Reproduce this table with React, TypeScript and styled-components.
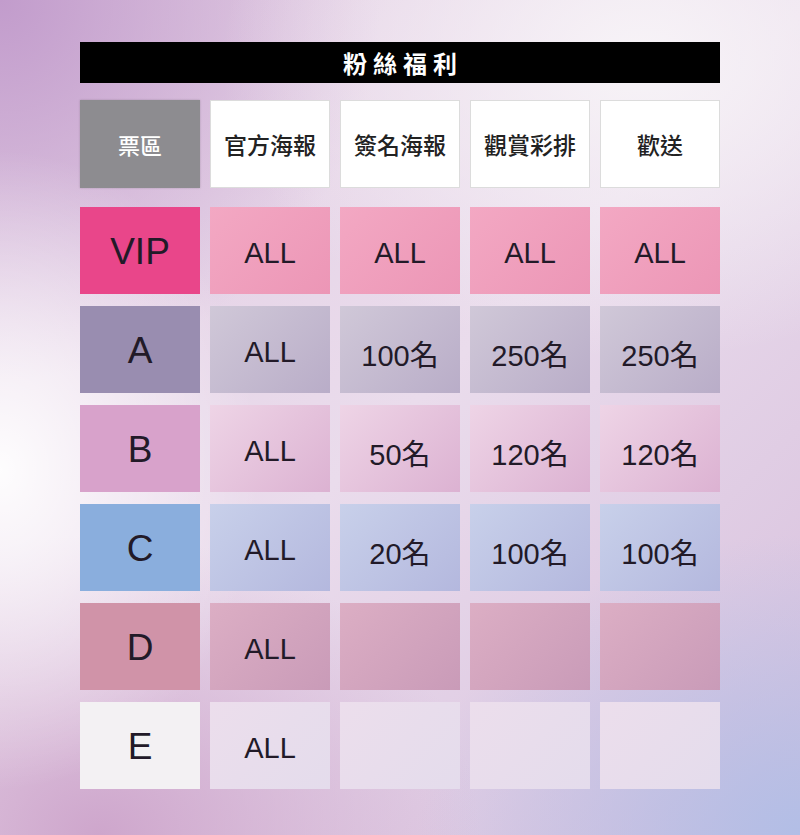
import React from 'react';
import styled, { createGlobalStyle } from 'styled-components';

const GlobalStyle = createGlobalStyle`
	html, body {
		margin: 0;
		padding: 0;
	}
	body {
		font-family: "Liberation Sans", "Noto Sans CJK TC", sans-serif;
	}
`;

interface Tier {
	name: string;
	tone: string;
	from: string;
	to: string;
	values: string[];
}

const headers = ['官方海報', '簽名海報', '觀賞彩排', '歡送'];

const tiers: Tier[] = [
	{ name: 'VIP', tone: '#e9468a', from: '#f3a8c3', to: '#ec96b6', values: ['ALL', 'ALL', 'ALL', 'ALL'] },
	{ name: 'A', tone: '#998db0', from: '#d0c8d8', to: '#b9adc8', values: ['ALL', '100名', '250名', '250名'] },
	{ name: 'B', tone: '#d8a2cb', from: '#eed4e6', to: '#dcb2d2', values: ['ALL', '50名', '120名', '120名'] },
	{ name: 'C', tone: '#8aaedd', from: '#c8d0ea', to: '#b4b8de', values: ['ALL', '20名', '100名', '100名'] },
	{ name: 'D', tone: '#d093a8', from: '#dcaec4', to: '#c99bb8', values: ['ALL', '', '', ''] },
	{ name: 'E', tone: '#f3f1f3', from: '#ecdeec', to: '#e4dcec', values: ['ALL', '', '', ''] },
];

function App() {
	return (
		<>
			<GlobalStyle />
			<Page>
				<Board>
					<TitleBar>粉絲福利</TitleBar>
					<HeadRow>
						<ZoneHead>票區</ZoneHead>
						{headers.map((h) => (
							<HeadCell key={h}>{h}</HeadCell>
						))}
					</HeadRow>
					<Body>
						{tiers.map((t) => (
							<React.Fragment key={t.name}>
								<ZoneCell tone={t.tone}>{t.name}</ZoneCell>
								{t.values.map((v, i) => (
									<ValueCell key={i} from={t.from} to={t.to}>
										{v}
									</ValueCell>
								))}
							</React.Fragment>
						))}
					</Body>
				</Board>
			</Page>
		</>
	);
}

export default App;

const Page = styled.div`
	width: 800px;
	height: 835px;
	overflow: hidden;
	background:
		radial-gradient(ellipse 260px 320px at 0px 470px, rgba(255, 255, 255, 0.95), rgba(255, 255, 255, 0) 100%),
		radial-gradient(ellipse 420px 300px at 640px 60px, rgba(248, 245, 248, 0.95), rgba(248, 245, 248, 0) 100%),
		radial-gradient(ellipse 380px 300px at 800px 835px, rgba(178, 190, 230, 1), rgba(178, 190, 230, 0) 100%),
		radial-gradient(ellipse 380px 380px at 0px 0px, rgba(194, 156, 204, 1), rgba(194, 156, 204, 0) 100%),
		radial-gradient(ellipse 380px 300px at 100px 835px, rgba(206, 166, 204, 1), rgba(206, 166, 204, 0) 100%),
		linear-gradient(135deg, #e2cce2 0%, #eadcec 50%, #d6bedc 100%);
	display: flex;
	justify-content: center;
`;

const Board = styled.div`
	width: 640px;
	padding-top: 42px;
	display: flex;
	flex-direction: column;
`;

const TitleBar = styled.div`
	height: 41px;
	background: #000;
	color: #fff;
	display: flex;
	align-items: center;
	justify-content: center;
	font-size: 24px;
	font-weight: bold;
	letter-spacing: 6px;
	padding-left: 6px;
	margin-bottom: 17px;
`;

const HeadRow = styled.div`
	display: grid;
	grid-template-columns: repeat(5, 120px);
	grid-template-rows: 88px;
	column-gap: 10px;
	margin-bottom: 19px;
`;

const Body = styled.div`
	display: grid;
	grid-template-columns: repeat(5, 120px);
	grid-auto-rows: 87px;
	column-gap: 10px;
	row-gap: 12px;
`;

const Cell = styled.div`
	display: flex;
	align-items: center;
	justify-content: center;
	box-sizing: border-box;
	color: #221a28;
`;

const ZoneHead = styled(Cell)`
	background: #8d8c90;
	color: #fff;
	font-size: 22px;
	font-weight: 500;
	box-shadow: 0 0 2px rgba(0, 0, 0, 0.2);
`;

const HeadCell = styled(Cell)`
	background: #fff;
	border: 1px solid #dcdcdc;
	font-size: 23px;
	font-weight: 500;
	color: #222;
`;

const ZoneCell = styled(Cell)<{ tone: string }>`
	background: ${(p) => p.tone};
	font-size: 37px;
	padding-top: 2px;
`;

const ValueCell = styled(Cell)<{ from: string; to: string }>`
	background: linear-gradient(135deg, ${(p) => p.from}, ${(p) => p.to});
	font-size: 29px;
	padding-top: 6px;
`;
